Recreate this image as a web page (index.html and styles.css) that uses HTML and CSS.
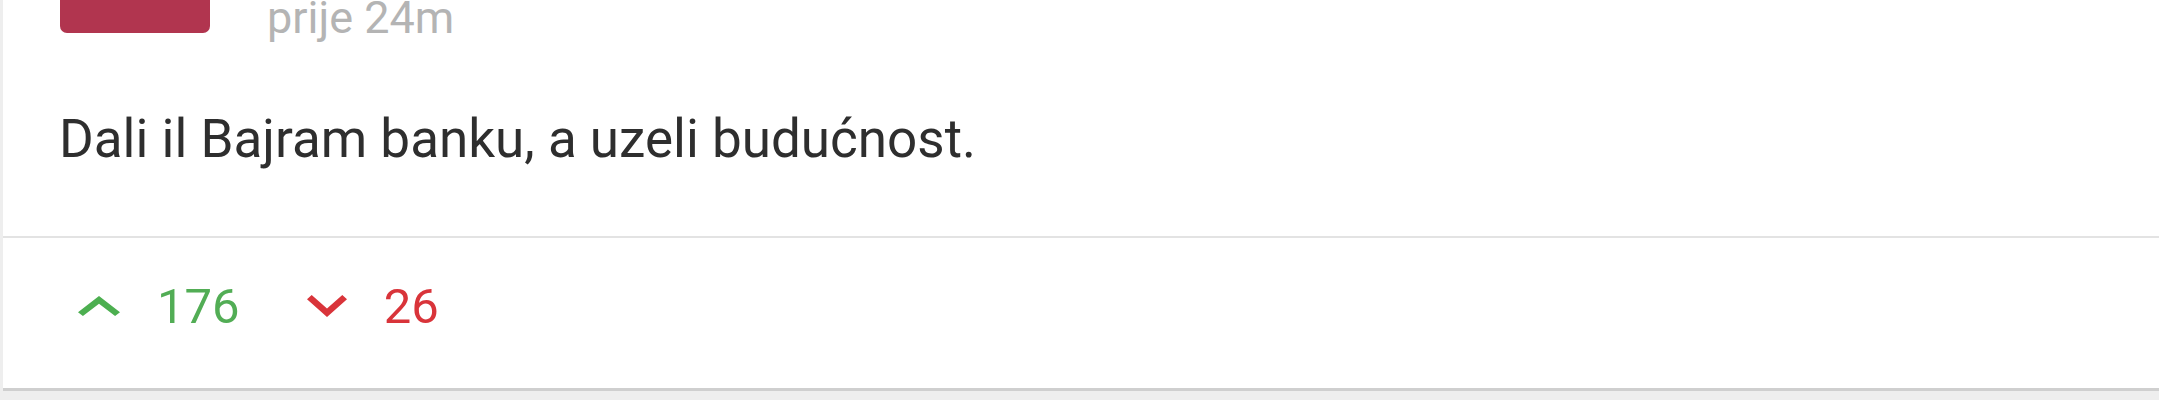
FILE: index.html
```html
<!DOCTYPE html>
<html lang="hr">
<head>
<meta charset="utf-8">
<title>Komentar</title>
<link rel="stylesheet" href="styles.css">
</head>
<body>
<article class="comment">
  <header class="comment-head">
    <div class="avatar"></div>
    <div class="meta">
      <span class="time">prije 24m</span>
    </div>
  </header>
  <p class="comment-text">Dali il Bajram banku, a uzeli budućnost.</p>
  <footer class="comment-foot">
    <button class="vote vote-up" type="button">
      <svg class="chev" width="42" height="20" viewBox="6 8 12 7.41" preserveAspectRatio="none" aria-hidden="true"><path d="M12 8l-6 6 1.41 1.41L12 10.83l4.59 4.58L18 14z"/></svg>
      <span class="count">176</span>
    </button>
    <button class="vote vote-down" type="button">
      <svg class="chev" width="40" height="22" viewBox="6 8.59 12 7.41" preserveAspectRatio="none" aria-hidden="true"><path d="M16.59 8.59L12 13.17 7.41 8.59 6 10l6 6 6-6z"/></svg>
      <span class="count">26</span>
    </button>
  </footer>
</article>
</body>
</html>
```

FILE: styles.css
```css
html, body {
  margin: 0;
  padding: 0;
}

body {
  background: #eeeeee;
  font-family: Roboto, "Liberation Sans", Arial, sans-serif;
  overflow: hidden;
}

.comment {
  margin: -117px 0 0 3px;
  background: #ffffff;
  border-bottom: 3px solid #cfcfcf;
}

.comment-head {
  display: flex;
  align-items: flex-end;
  padding-left: 57px;
}

.avatar {
  width: 150px;
  height: 150px;
  flex: 0 0 auto;
  background: #b1354f;
  border-radius: 7px;
}

.meta {
  margin-left: 57px;
  margin-bottom: -7px;
}

.time {
  display: block;
  font-size: 45px;
  line-height: 1;
  color: #b4b4b4;
}

.comment-text {
  margin: 75px 0 0;
  padding: 0 0 65px 56px;
  font-size: 53px;
  line-height: 1.18;
  color: #2e2e2e;
}

.comment-foot {
  display: flex;
  align-items: center;
  border-top: 2px solid #e3e3e3;
  padding: 44px 0 57px 75px;
}

.vote {
  display: flex;
  align-items: center;
  gap: 37px;
  border: 0;
  background: none;
  padding: 0;
  margin: 0;
  font: inherit;
  cursor: pointer;
}

.vote-down {
  margin-left: 67px;
}

.count {
  font-size: 49px;
  line-height: 1;
}

.vote-up .chev { fill: #4caf50; }
.vote-up .count { color: #52ad55; }
.vote-down .chev { fill: #d9343a; }
.vote-down .count { color: #d9343a; }
```
